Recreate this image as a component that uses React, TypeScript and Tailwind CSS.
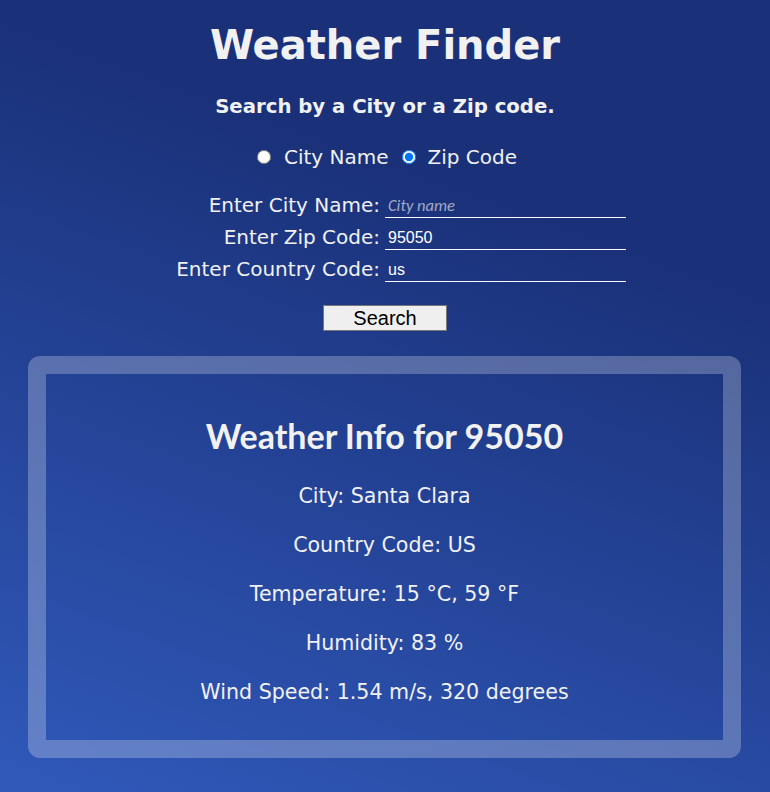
import React, { useState } from "react";

const verdana = "font-['Verdana','DejaVu_Sans',sans-serif]";

export const WeatherInfo = ({ zip }: { zip: string }) => {
  const rows = [
    "City: Santa Clara",
    "Country Code: US",
    "Temperature: 15 °C, 59 °F",
    "Humidity: 83 %",
    "Wind Speed: 1.54 m/s, 320 degrees",
  ];
  return (
    <div className="ml-[28px] mr-[29px] mt-[25px] h-[402px] rounded-[12px] border-[18px] border-[rgba(255,255,255,0.25)]">
      <div className="flex flex-col items-center text-center pt-[43px] text-[#f1f1f1]">
        <h2 className="font-['Lato',sans-serif] font-bold text-[34px] leading-[38px]">
          Weather Info for {zip}
        </h2>
        <div className="flex flex-col items-center gap-[25px] mt-[29px]">
          {rows.map((row, index) => (
            <p key={index} className={`${verdana} text-[20.6px] leading-[24px]`}>
              {row}
            </p>
          ))}
        </div>
      </div>
    </div>
  );
};

export default function App() {
  const [mode, setMode] = useState<"city" | "zip">("zip");
  const [city, setCity] = useState("");
  const [zip, setZip] = useState("95050");
  const [country, setCountry] = useState("us");

  const fields = [
    { label: "Enter City Name:", value: city, set: setCity, placeholder: "City name" },
    { label: "Enter Zip Code:", value: zip, set: setZip, placeholder: "" },
    { label: "Enter Country Code:", value: country, set: setCountry, placeholder: "" },
  ];

  return (
    <div className="min-h-screen h-[792px] bg-[linear-gradient(20deg,#3059ba_0%,#1a3179_72%)] text-[#f1f1f1] overflow-hidden">
      <div className={`flex flex-col items-center text-center pt-[21px] ${verdana}`}>
        <h1 className="font-bold text-[40px] leading-[48px]">Weather Finder</h1>
        <h3 className="font-bold text-[19.7px] leading-[24px] mt-[26px]">
          Search by a City or a Zip code.
        </h3>
        <div className="flex items-center mt-[26px] pl-[4px] text-[20px] leading-[24px]">
          <input
            type="radio"
            name="mode"
            className="w-[14px] h-[14px] mr-[13px]"
            checked={mode === "city"}
            onChange={() => setMode("city")}
          />
          <span className="mr-[13px]">City Name</span>
          <input
            type="radio"
            name="mode"
            className="w-[14px] h-[14px] mr-[12px]"
            checked={mode === "zip"}
            onChange={() => setMode("zip")}
          />
          <span>Zip Code</span>
        </div>
      </div>

      <div className="grid grid-cols-2 mt-[20px]">
        {fields.map((field, index) => (
          <React.Fragment key={index}>
            <div className={`${verdana} text-[20px] h-[32px] leading-[32px] text-right pr-[5px]`}>
              {field.label}
            </div>
            <div className="h-[32px] flex items-center">
              <input
                className="w-[241px] h-[24px] mt-[2px] bg-transparent border-b border-white px-[3px] text-[16px] text-white font-['Arial','Liberation_Sans',sans-serif] outline-none placeholder:text-[#a3a9c4] placeholder:italic placeholder:font-['Calibri','Lato',sans-serif] placeholder:text-[16.5px]"
                value={field.value}
                placeholder={field.placeholder}
                onChange={(e) => field.set(e.target.value)}
              />
            </div>
          </React.Fragment>
        ))}
      </div>

      <div className="flex justify-center mt-[20px]">
        <button className="w-[124px] h-[26px] bg-[#efefef] border border-[#767676] text-black text-[20px] leading-[24px] font-['Arial','Liberation_Sans',sans-serif]">
          Search
        </button>
      </div>

      <WeatherInfo zip={zip} />
    </div>
  );
}
